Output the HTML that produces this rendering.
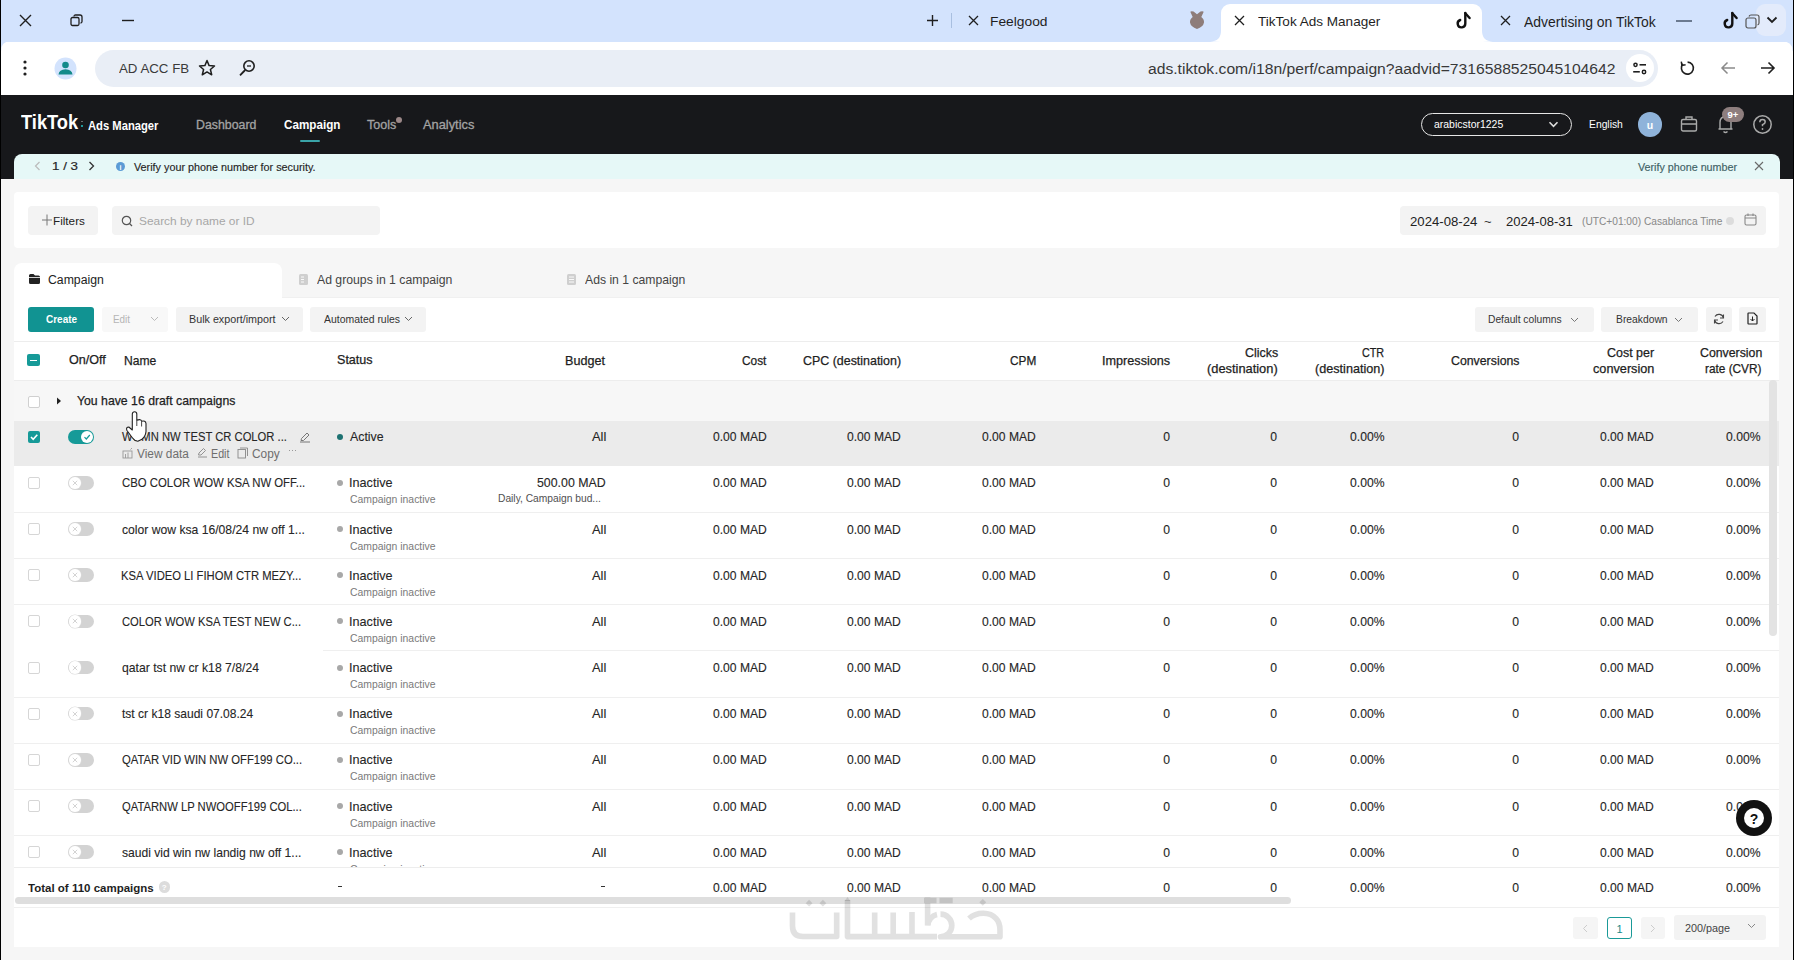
<!DOCTYPE html><html><head><meta charset="utf-8"><style>
html,body{margin:0;padding:0;width:1794px;height:960px;overflow:hidden;background:#f6f6f6;}
body{position:relative;font-family:"Liberation Sans",sans-serif;}
.t{position:absolute;white-space:nowrap;transform-origin:0 0;}
.r{position:absolute;}
svg{position:absolute;overflow:visible;}
</style></head><body>
<div class="r" style="left:0px;top:0px;width:1794.00px;height:41.50px;background:#d3e3fd;"></div>
<div class="r" style="left:0px;top:41.5px;width:1794.00px;height:53.50px;background:#ffffff;"></div>
<div class="r" style="left:1221px;top:4.2px;width:261.00px;height:37.80px;background:#ffffff;border-radius:9px 9px 0 0;"></div>
<svg style="left:0px;top:0.00px" width="1794" height="50"><path d="M1210 41.5 Q1221 41.5 1221 30.5 V42Z M1493 41.5 Q1482 41.5 1482 30.5 V42Z" fill="#fff"/><path d="M0 53 V41.5 H10 Q1.2 41.5 1.2 50.5Z M1794 53 V41.5 H1782 Q1792.5 41.5 1792.5 50.5Z" fill="#d3e3fd"/></svg>
<div class="r" style="left:95px;top:50px;width:1563.00px;height:37.00px;background:#e9eef6;border-radius:19px;"></div>
<div class="r" style="left:1626px;top:54px;width:28.00px;height:28.00px;background:#ffffff;border-radius:50%;"></div>
<div class="r" style="left:1755.5px;top:4px;width:30.50px;height:31.50px;background:#e3ebfb;border-radius:9px;"></div>
<svg style="left:19px;top:14.00px" width="14" height="14"><path d="M1 1L12 12M12 1L1 12" stroke="#1f1f1f" stroke-width="1.4" fill="none"/></svg>
<svg style="left:70px;top:14.00px" width="14" height="14"><rect x="1" y="3.5" width="8" height="8" rx="1.5" stroke="#1f1f1f" stroke-width="1.3" fill="none"/><path d="M4 2.5 Q4 1 5.5 1 H10 Q12 1 12 3 V7.5 Q12 9 10.5 9" stroke="#1f1f1f" stroke-width="1.3" fill="none"/></svg>
<svg style="left:121px;top:19.00px" width="14" height="4"><path d="M1 1.5H13" stroke="#1f1f1f" stroke-width="1.4"/></svg>
<svg style="left:926px;top:14.00px" width="13" height="13"><path d="M6.5 1V12M1 6.5H12" stroke="#1f1f1f" stroke-width="1.4"/></svg>
<div class="r" style="left:951px;top:13px;width:1.00px;height:15.00px;background:#a8bfe0;"></div>
<svg style="left:968px;top:15.00px" width="11" height="11"><path d="M1 1L10 10M10 1L1 10" stroke="#1f1f1f" stroke-width="1.3"/></svg>
<div class="t" style="left:989.97px;top:13.5px;font-size:13.4px;line-height:16px;color:#1f1f1f;font-weight:normal;transform:scaleX(1.0296);">Feelgood</div>
<svg style="left:0px;top:0.00px" width="1794" height="40"><path d="M1190.3 11.8 Q1191 11 1193.5 11.6 L1197 14.3 L1200.5 11.6 Q1203 11 1203.7 11.8 L1201.3 17 Q1204.3 19.3 1204 22.6 Q1203.2 27 1197 29 Q1190.8 27 1190 22.6 Q1189.7 19.3 1192.7 17 Z" fill="#8e7d7a"/></svg>
<svg style="left:1234px;top:15.00px" width="11" height="11"><path d="M1 1L10 10M10 1L1 10" stroke="#1f1f1f" stroke-width="1.3"/></svg>
<div class="t" style="left:1258.00px;top:13.5px;font-size:13.6px;line-height:16px;color:#1f1f1f;font-weight:normal;transform:scaleX(0.9970);">TikTok Ads Manager</div>
<svg style="left:1456px;top:12.00px" width="16" height="17"><path d="M9.3 1 V11.5 A3.8 3.8 0 1 1 4.2 8" stroke="#111" stroke-width="2.4" fill="none" stroke-linecap="round"/><path d="M9.3 1.2 L13.6 6" stroke="#111" stroke-width="2.4" stroke-linecap="round"/></svg>
<svg style="left:1500px;top:15.00px" width="11" height="11"><path d="M1 1L10 10M10 1L1 10" stroke="#1f1f1f" stroke-width="1.3"/></svg>
<div class="t" style="left:1524.00px;top:13.5px;font-size:13.9px;line-height:16px;color:#1f1f1f;font-weight:normal;transform:scaleX(1.0034);">Advertising on TikTok</div>
<div class="r" style="left:1676px;top:20px;width:16.00px;height:1.50px;background:#6b7a90;"></div>
<svg style="left:1723px;top:12.00px" width="16" height="17"><path d="M9.3 1 V11.5 A3.8 3.8 0 1 1 4.2 8" stroke="#111" stroke-width="2.4" fill="none" stroke-linecap="round"/><path d="M9.3 1.2 L13.6 6" stroke="#111" stroke-width="2.4" stroke-linecap="round"/></svg>
<svg style="left:1745px;top:14.00px" width="15" height="15"><rect x="1" y="4" width="10" height="10" rx="2" stroke="#555" stroke-width="1.2" fill="none"/><path d="M4 2.5 Q4.5 1 6 1 H12 Q14 1 14 3 V9 Q14 10.5 12.5 11" stroke="#555" stroke-width="1.2" fill="none"/></svg>
<svg style="left:1766px;top:16.00px" width="12" height="8"><path d="M1.5 1.5L6 6L10.5 1.5" stroke="#1f1f1f" stroke-width="1.8" fill="none"/></svg>
<svg style="left:22px;top:60.00px" width="6" height="18"><circle cx="3" cy="2" r="1.6" fill="#1f1f1f"/><circle cx="3" cy="8" r="1.6" fill="#1f1f1f"/><circle cx="3" cy="14" r="1.6" fill="#1f1f1f"/></svg>
<svg style="left:54px;top:57.00px" width="23" height="23"><circle cx="11.5" cy="11.5" r="11" fill="#d3e3fd"/><circle cx="11.5" cy="8" r="3.3" fill="#138a8a"/><path d="M4.5 17.5 Q5 12.5 11.5 12.3 Q18 12.5 18.5 17.5 Z" fill="#138a8a"/></svg>
<div class="t" style="left:119.00px;top:60.5px;font-size:13.3px;line-height:16px;color:#3a3a3a;font-weight:normal;transform:scaleX(0.9992);">AD ACC FB</div>
<svg style="left:198px;top:59.00px" width="18" height="18"><path d="M9 1.5 L11.1 6.6 L16.5 7 L12.4 10.5 L13.7 15.8 L9 12.9 L4.3 15.8 L5.6 10.5 L1.5 7 L6.9 6.6 Z" stroke="#1f1f1f" stroke-width="1.5" fill="none" stroke-linejoin="round"/></svg>
<svg style="left:238px;top:59.00px" width="19" height="18"><circle cx="11" cy="7" r="5.2" stroke="#1f1f1f" stroke-width="1.6" fill="none"/><path d="M7.2 11 L2 16.3" stroke="#1f1f1f" stroke-width="1.8"/><path d="M9 7H13" stroke="#1f1f1f" stroke-width="1.3"/></svg>
<div class="t" style="left:1148.00px;top:60.5px;font-size:15.2px;line-height:16px;color:#383838;font-weight:normal;transform:scaleX(1.0319);">ads.tiktok.com/i18n/perf/campaign?aadvid=7316588525045104642</div>
<svg style="left:1632px;top:61.00px" width="17" height="15"><circle cx="3.5" cy="3.8" r="1.6" stroke="#1f1f1f" stroke-width="1.5" fill="none"/><path d="M7.5 3.8H14" stroke="#1f1f1f" stroke-width="1.6"/><circle cx="12" cy="11" r="1.7" stroke="#1f1f1f" stroke-width="1.5" fill="none"/><path d="M1.2 10.8H7.8" stroke="#1f1f1f" stroke-width="1.6"/></svg>
<svg style="left:1679px;top:60.00px" width="17" height="17"><path d="M4.1 3.9 A6 6 0 1 0 8.6 2.1" stroke="#1f1f1f" stroke-width="1.6" fill="none"/><path d="M2.3 1.6 L2.9 5.4 L6.6 4.8" stroke="#1f1f1f" stroke-width="1.5" fill="none"/></svg>
<svg style="left:1720px;top:61.00px" width="16" height="14"><path d="M15 7H2M7.5 1.5L2 7L7.5 12.5" stroke="#8a8a8a" stroke-width="1.5" fill="none"/></svg>
<svg style="left:1760px;top:61.00px" width="16" height="14"><path d="M1 7H14M8.5 1.5L14 7L8.5 12.5" stroke="#1f1f1f" stroke-width="1.6" fill="none"/></svg>
<div class="r" style="left:0px;top:95px;width:1794.00px;height:84.00px;background:#17181b;"></div>
<div class="t" style="left:21.00px;top:114.3px;font-size:20px;line-height:16px;color:#ffffff;font-weight:bold;transform:scaleX(0.9136);">TikTok</div>
<div class="r" style="left:80.5px;top:124.5px;width:2.50px;height:2.50px;background:#25c4c8;border-radius:50%;"></div>
<div class="r" style="left:81px;top:120.5px;width:1.50px;height:1.50px;background:#777777;border-radius:50%;"></div>
<div class="t" style="left:88.00px;top:117.5px;font-size:12.6px;line-height:16px;color:#ffffff;font-weight:bold;transform:scaleX(0.8904);">Ads Manager</div>
<div class="t" style="left:196.00px;top:116.5px;font-size:12.3px;line-height:16px;color:#a3a3a3;font-weight:normal;transform:scaleX(1.0031);-webkit-text-stroke:0.3px #a3a3a3;">Dashboard</div>
<div class="t" style="left:284.00px;top:116.5px;font-size:12.2px;line-height:16px;color:#ffffff;font-weight:bold;transform:scaleX(0.9578);">Campaign</div>
<div class="r" style="left:299.5px;top:140px;width:20.00px;height:2.30px;background:#3aa3a8;border-radius:2px;"></div>
<div class="t" style="left:367.00px;top:116.5px;font-size:12.4px;line-height:16px;color:#a3a3a3;font-weight:normal;transform:scaleX(1.0094);-webkit-text-stroke:0.3px #a3a3a3;">Tools</div>
<div class="r" style="left:396px;top:117px;width:6.00px;height:6.00px;background:#9c8888;border-radius:50%;"></div>
<div class="t" style="left:423.00px;top:116.5px;font-size:12.7px;line-height:16px;color:#a3a3a3;font-weight:normal;transform:scaleX(1.0114);-webkit-text-stroke:0.3px #a3a3a3;">Analytics</div>
<div class="r" style="left:1421px;top:113px;width:151.00px;height:23.00px;background:transparent;border:1.6px solid #e6e6e6;border-radius:12px;box-sizing:border-box;"></div>
<div class="t" style="left:1434.00px;top:115.8px;font-size:11.2px;line-height:16px;color:#ffffff;font-weight:normal;transform:scaleX(0.9351);">arabicstor1225</div>
<svg style="left:1548px;top:121.00px" width="11" height="7"><path d="M1.5 1.3L5.5 5.3L9.5 1.3" stroke="#ddd" stroke-width="1.6" fill="none"/></svg>
<div class="t" style="left:1588.50px;top:115.8px;font-size:11.5px;line-height:16px;color:#ffffff;font-weight:normal;transform:scaleX(0.8976);">English</div>
<div class="r" style="left:1638px;top:112px;width:24.00px;height:24.50px;background:#8fb3da;border-radius:50%;"></div>
<div class="t" style="left:1350px;width:600px;text-align:center;top:116.5px;font-size:10.5px;line-height:16px;color:#ffffff;font-weight:bold;">u</div>
<svg style="left:1680px;top:115.00px" width="18" height="18"><rect x="1.5" y="4.5" width="15" height="11.5" rx="1.5" stroke="#aaa" stroke-width="1.4" fill="none"/><path d="M6 4.5V2H12V4.5M1.5 9H16.5" stroke="#aaa" stroke-width="1.4" fill="none"/></svg>
<svg style="left:1716px;top:113.00px" width="20" height="22"><path d="M4 16 V9.5 Q4 3.8 9.5 3.5 Q15 3.8 15 9.5 V16 Z M2.5 16 H16.5 M7.5 18.5 Q9.5 20.5 11.5 18.5" stroke="#aaa" stroke-width="1.4" fill="none"/></svg>
<div class="r" style="left:1722px;top:107px;width:22.00px;height:15.00px;background:#8e7e7e;border-radius:8px;"></div>
<div class="t" style="left:1433px;width:600px;text-align:center;top:107.0px;font-size:9.5px;line-height:16px;color:#ffffff;font-weight:bold;">9+</div>
<svg style="left:1752px;top:114.00px" width="21" height="21"><circle cx="10.5" cy="10.5" r="8.7" stroke="#aaa" stroke-width="1.5" fill="none"/><path d="M7.8 8.2 Q7.8 5.6 10.5 5.6 Q13.2 5.6 13.2 8 Q13.2 9.6 10.5 10.6 V12.3" stroke="#aaa" stroke-width="1.5" fill="none"/><circle cx="10.5" cy="15" r="0.9" fill="#aaa"/></svg>
<div class="r" style="left:14px;top:154px;width:1766.00px;height:25.00px;background:#e6f8f7;border-radius:8px 8px 0 0;"></div>
<svg style="left:34px;top:161.00px" width="7" height="10"><path d="M5.5 1L1.5 5L5.5 9" stroke="#bbb" stroke-width="1.2" fill="none"/></svg>
<div class="t" style="left:52.00px;top:158.0px;font-size:11.5px;line-height:16px;color:#262626;font-weight:normal;transform:scaleX(1.1601);-webkit-text-stroke:0.2px #262626;">1 / 3</div>
<svg style="left:88px;top:161.00px" width="7" height="10"><path d="M1.5 1L5.5 5L1.5 9" stroke="#333" stroke-width="1.3" fill="none"/></svg>
<div class="r" style="left:116px;top:162px;width:9.00px;height:9.00px;background:#5b9bd5;border-radius:50%;"></div>
<div class="t" style="left:-179.5px;width:600px;text-align:center;top:162.5px;font-size:7px;line-height:9px;color:#ffffff;font-weight:bold;">i</div>
<div class="t" style="left:134.00px;top:158.5px;font-size:10.8px;line-height:16px;color:#262626;font-weight:normal;transform:scaleX(0.9993);-webkit-text-stroke:0.15px #262626;">Verify your phone number for security.</div>
<div class="t" style="left:1638.00px;top:158.5px;font-size:10.6px;line-height:16px;color:#3f6266;font-weight:normal;transform:scaleX(1.0129);-webkit-text-stroke:0.15px #3f6266;">Verify phone number</div>
<svg style="left:1754px;top:161.00px" width="10" height="10"><path d="M1 1L9 9M9 1L1 9" stroke="#6a6a6a" stroke-width="1.1"/></svg>
<div class="r" style="left:14px;top:192px;width:1765.00px;height:56.00px;background:#ffffff;border-radius:4px;"></div>
<div class="r" style="left:28px;top:206px;width:70.00px;height:29.00px;background:#f3f3f3;border-radius:4px;"></div>
<svg style="left:42px;top:214.00px" width="10" height="12"><path d="M5 0.5V11.5M0 6H10" stroke="#777" stroke-width="1"/></svg>
<div class="t" style="left:53.00px;top:212.5px;font-size:11.8px;line-height:16px;color:#222;font-weight:normal;transform:scaleX(0.9933);">Filters</div>
<div class="r" style="left:112px;top:206px;width:268.00px;height:29.00px;background:#f3f3f3;border-radius:4px;"></div>
<svg style="left:121px;top:215.00px" width="12" height="12"><circle cx="5.5" cy="5.5" r="4.2" stroke="#555" stroke-width="1.2" fill="none"/><path d="M8.5 8.5L11 11" stroke="#555" stroke-width="1.2"/></svg>
<div class="t" style="left:138.50px;top:212.7px;font-size:11.8px;line-height:16px;color:#a6a6a6;font-weight:normal;transform:scaleX(1.0068);">Search by name or ID</div>
<div class="r" style="left:1400px;top:206px;width:366.00px;height:29.00px;background:#f3f3f3;border-radius:4px;"></div>
<div class="t" style="left:1409.50px;top:213.5px;font-size:13.1px;line-height:16px;color:#222;font-weight:normal;transform:scaleX(1.0046);">2024-08-24</div>
<div class="t" style="left:1484px;top:213.5px;font-size:13px;line-height:16px;color:#333;font-weight:normal;">~</div>
<div class="t" style="left:1506.00px;top:213.5px;font-size:13.1px;line-height:16px;color:#222;font-weight:normal;transform:scaleX(0.9971);">2024-08-31</div>
<div class="t" style="left:1582.00px;top:213.5px;font-size:10.2px;line-height:16px;color:#888;font-weight:normal;transform:scaleX(0.9984);">(UTC+01:00) Casablanca Time</div>
<div class="r" style="left:1726px;top:217px;width:8.00px;height:8.00px;background:#dcdcdc;border-radius:50%;"></div>
<svg style="left:1744px;top:213.00px" width="13" height="13"><rect x="1" y="2" width="11" height="10" rx="1.5" stroke="#888" stroke-width="1.1" fill="none"/><path d="M1 5H12M4 0.5V3M9 0.5V3" stroke="#888" stroke-width="1.1"/></svg>
<div class="r" style="left:14px;top:297px;width:1765.00px;height:1.00px;background:#f0f0f0;"></div>
<div class="r" style="left:14px;top:263px;width:268.00px;height:35.00px;background:#ffffff;border-radius:8px 8px 0 0;"></div>
<svg style="left:28px;top:273.00px" width="13" height="12"><path d="M1 2.5 Q1 1 2.5 1 H5.5 L7 2.5 H10.5 Q12 2.5 12 4 V9.5 Q12 11 10.5 11 H2.5 Q1 11 1 9.5 Z" fill="#222"/><path d="M1 4.5H12" stroke="#fff" stroke-width="0.8"/></svg>
<div class="t" style="left:47.50px;top:271.8px;font-size:12.3px;line-height:16px;color:#222;font-weight:normal;transform:scaleX(0.9962);">Campaign</div>
<svg style="left:298px;top:273.00px" width="11" height="13"><rect x="1" y="1" width="9" height="11" rx="1.5" fill="#cfcfcf"/><path d="M3 4H6M3 6.5H6M3 9H6" stroke="#fff" stroke-width="0.9"/></svg>
<div class="t" style="left:316.50px;top:271.8px;font-size:12.3px;line-height:16px;color:#444;font-weight:normal;transform:scaleX(0.9949);">Ad groups in 1 campaign</div>
<svg style="left:566px;top:273.00px" width="11" height="13"><rect x="1" y="1" width="9" height="11" rx="1.5" fill="#cfcfcf"/><path d="M3 4H8M3 6.5H8M3 9H8" stroke="#fff" stroke-width="0.9"/></svg>
<div class="t" style="left:585.00px;top:271.8px;font-size:12.2px;line-height:16px;color:#444;font-weight:normal;transform:scaleX(1.0001);">Ads in 1 campaign</div>
<div class="r" style="left:14px;top:298px;width:1765.00px;height:649.00px;background:#ffffff;"></div>
<div class="r" style="left:28px;top:307px;width:66.00px;height:25.00px;background:#119392;border-radius:3px;"></div>
<div class="t" style="left:46.00px;top:310.9px;font-size:11px;line-height:16px;color:#ffffff;font-weight:bold;transform:scaleX(0.9085);">Create</div>
<div class="r" style="left:102px;top:307px;width:66.00px;height:25.00px;background:#f8f8f8;border-radius:3px;"></div>
<div class="t" style="left:113.00px;top:310.9px;font-size:11px;line-height:16px;color:#b5b5b5;font-weight:normal;transform:scaleX(0.8995);">Edit</div>
<svg style="left:150px;top:316.00px" width="9" height="6"><path d="M1 1L4.5 4.5L8 1" stroke="#bbb" stroke-width="1" fill="none"/></svg>
<div class="r" style="left:176px;top:307px;width:127.00px;height:25.00px;background:#f3f3f3;border-radius:3px;"></div>
<div class="t" style="left:189.00px;top:310.9px;font-size:11px;line-height:16px;color:#333;font-weight:normal;transform:scaleX(0.9764);">Bulk export/import</div>
<svg style="left:281px;top:316.00px" width="9" height="6"><path d="M1 1L4.5 4.5L8 1" stroke="#666" stroke-width="1" fill="none"/></svg>
<div class="r" style="left:310px;top:307px;width:116.00px;height:25.00px;background:#f3f3f3;border-radius:3px;"></div>
<div class="t" style="left:323.50px;top:310.9px;font-size:11px;line-height:16px;color:#333;font-weight:normal;transform:scaleX(0.9491);">Automated rules</div>
<svg style="left:404px;top:316.00px" width="9" height="6"><path d="M1 1L4.5 4.5L8 1" stroke="#666" stroke-width="1" fill="none"/></svg>
<div class="r" style="left:1475px;top:307px;width:119.00px;height:25.00px;background:#f3f3f3;border-radius:3px;"></div>
<div class="t" style="left:1488.00px;top:310.9px;font-size:11px;line-height:16px;color:#333;font-weight:normal;transform:scaleX(0.9324);">Default columns</div>
<svg style="left:1570px;top:317.00px" width="9" height="6"><path d="M1 1L4.5 4.5L8 1" stroke="#777" stroke-width="1" fill="none"/></svg>
<div class="r" style="left:1601px;top:307px;width:97.00px;height:25.00px;background:#f3f3f3;border-radius:3px;"></div>
<div class="t" style="left:1615.50px;top:310.9px;font-size:11px;line-height:16px;color:#333;font-weight:normal;transform:scaleX(0.9378);">Breakdown</div>
<svg style="left:1674px;top:317.00px" width="9" height="6"><path d="M1 1L4.5 4.5L8 1" stroke="#777" stroke-width="1" fill="none"/></svg>
<div class="r" style="left:1706px;top:307px;width:26.00px;height:25.00px;background:#f3f3f3;border-radius:3px;"></div>
<svg style="left:1713px;top:313.00px" width="12" height="12"><path d="M10.5 5 A4.7 4.7 0 0 0 2 3.5 M1.5 7 A4.7 4.7 0 0 0 10 8.5" stroke="#444" stroke-width="1.2" fill="none"/><path d="M10.5 1.5V5H7M1.5 10.5V7H5" stroke="#444" stroke-width="1.1" fill="none"/></svg>
<div class="r" style="left:1739px;top:307px;width:27.00px;height:25.00px;background:#f3f3f3;border-radius:3px;"></div>
<svg style="left:1747px;top:312.00px" width="11" height="13"><path d="M1 1.5 Q1 1 1.5 1 H7 L10 4 V11.5 Q10 12 9.5 12 H1.5 Q1 12 1 11.5 Z" stroke="#222" stroke-width="1.2" fill="none"/><path d="M5.5 4.5V9M3.5 7L5.5 9L7.5 7" stroke="#222" stroke-width="1" fill="none"/></svg>
<div class="r" style="left:14px;top:341px;width:1765.00px;height:1.00px;background:#ededed;"></div>
<div class="r" style="left:14px;top:380px;width:1765.00px;height:1.00px;background:#ededed;"></div>
<div class="r" style="left:27px;top:354px;width:12.50px;height:12.00px;background:#169a98;border-radius:2px;"></div>
<div class="r" style="left:30px;top:359.5px;width:6.50px;height:1.50px;background:#ffffff;"></div>
<div class="t" style="left:68.50px;top:351.5px;font-size:12.2px;line-height:16px;color:#1e1e1e;font-weight:normal;transform:scaleX(1.0334);-webkit-text-stroke:0.25px #1e1e1e;">On/Off</div>
<div class="t" style="left:123.51px;top:352.5px;font-size:12.2px;line-height:16px;color:#1e1e1e;font-weight:normal;transform:scaleX(0.9927);-webkit-text-stroke:0.25px #1e1e1e;">Name</div>
<div class="t" style="left:337.00px;top:351.5px;font-size:12.2px;line-height:16px;color:#1e1e1e;font-weight:normal;transform:scaleX(1.0303);-webkit-text-stroke:0.25px #1e1e1e;">Status</div>
<div class="t" style="left:564.97px;top:352.5px;font-size:12.2px;line-height:16px;color:#1e1e1e;font-weight:normal;transform:scaleX(1.0329);-webkit-text-stroke:0.25px #1e1e1e;">Budget</div>
<div class="t" style="left:741.50px;top:352.5px;font-size:12.2px;line-height:16px;color:#1e1e1e;font-weight:normal;transform:scaleX(0.9738);-webkit-text-stroke:0.25px #1e1e1e;">Cost</div>
<div class="t" style="left:803.00px;top:352.5px;font-size:12.2px;line-height:16px;color:#1e1e1e;font-weight:normal;transform:scaleX(1.0195);-webkit-text-stroke:0.25px #1e1e1e;">CPC (destination)</div>
<div class="t" style="left:1009.70px;top:352.5px;font-size:12.2px;line-height:16px;color:#1e1e1e;font-weight:normal;transform:scaleX(0.9692);-webkit-text-stroke:0.25px #1e1e1e;">CPM</div>
<div class="t" style="left:1101.96px;top:352.5px;font-size:12.2px;line-height:16px;color:#1e1e1e;font-weight:normal;transform:scaleX(1.0371);-webkit-text-stroke:0.25px #1e1e1e;">Impressions</div>
<div class="t" style="left:1245.00px;top:344.5px;font-size:12.2px;line-height:16px;color:#1e1e1e;font-weight:normal;transform:scaleX(1.0184);-webkit-text-stroke:0.25px #1e1e1e;">Clicks</div>
<div class="t" style="left:1207.40px;top:361.0px;font-size:12.2px;line-height:16px;color:#1e1e1e;font-weight:normal;transform:scaleX(1.0536);-webkit-text-stroke:0.25px #1e1e1e;">(destination)</div>
<div class="t" style="left:1362.40px;top:344.5px;font-size:12.2px;line-height:16px;color:#1e1e1e;font-weight:normal;transform:scaleX(0.8833);-webkit-text-stroke:0.25px #1e1e1e;">CTR</div>
<div class="t" style="left:1315.20px;top:361.0px;font-size:12.2px;line-height:16px;color:#1e1e1e;font-weight:normal;transform:scaleX(1.0372);-webkit-text-stroke:0.25px #1e1e1e;">(destination)</div>
<div class="t" style="left:1451.40px;top:352.5px;font-size:12.2px;line-height:16px;color:#1e1e1e;font-weight:normal;transform:scaleX(1.0112);-webkit-text-stroke:0.25px #1e1e1e;">Conversions</div>
<div class="t" style="left:1607.00px;top:344.5px;font-size:12.2px;line-height:16px;color:#1e1e1e;font-weight:normal;transform:scaleX(1.0217);-webkit-text-stroke:0.25px #1e1e1e;">Cost per</div>
<div class="t" style="left:1593.40px;top:361.0px;font-size:12.2px;line-height:16px;color:#1e1e1e;font-weight:normal;transform:scaleX(1.0420);-webkit-text-stroke:0.25px #1e1e1e;">conversion</div>
<div class="t" style="left:1699.50px;top:344.5px;font-size:12.2px;line-height:16px;color:#1e1e1e;font-weight:normal;transform:scaleX(1.0104);-webkit-text-stroke:0.25px #1e1e1e;">Conversion</div>
<div class="t" style="left:1704.60px;top:361.0px;font-size:12.2px;line-height:16px;color:#1e1e1e;font-weight:normal;transform:scaleX(0.9695);-webkit-text-stroke:0.25px #1e1e1e;">rate (CVR)</div>
<div class="r" style="left:14px;top:381px;width:1765.00px;height:40.00px;background:#f7f7f7;"></div>
<div class="r" style="left:27.5px;top:395.5px;width:12.00px;height:12.00px;background:#ffffff;border:1px solid #d0d0d0;border-radius:2px;box-sizing:border-box;"></div>
<svg style="left:56px;top:397.00px" width="6" height="8"><path d="M1 0.5L5 4L1 7.5Z" fill="#222"/></svg>
<div class="t" style="left:76.70px;top:392.8px;font-size:12.2px;line-height:16px;color:#1e1e1e;font-weight:normal;transform:scaleX(1.0062);-webkit-text-stroke:0.25px #1e1e1e;">You have 16 draft campaigns</div>
<div style="position:absolute;left:0;top:381px;width:1794px;height:487px;overflow:hidden;">
<div class="r" style="left:14px;top:39.5px;width:1765.00px;height:45.50px;background:#ebebeb;"></div>
<div class="r" style="left:27.5px;top:49.69999999999999px;width:12.00px;height:12.00px;background:#169a98;border-radius:2px;"></div>
<svg style="left:29px;top:50.70px" width="10" height="10"><path d="M2 5L4.2 7.3L8.3 2.8" stroke="#fff" stroke-width="1.6" fill="none"/></svg>
<div class="r" style="left:68px;top:48.69999999999999px;width:26.00px;height:14.00px;background:#169a98;border-radius:7px;"></div>
<div class="r" style="left:81px;top:49.69999999999999px;width:12.00px;height:12.00px;background:#ffffff;border-radius:50%;"></div>
<svg style="left:83px;top:51.70px" width="8" height="8"><path d="M1.5 4.2L3.3 6L6.8 2" stroke="#169a98" stroke-width="1.2" fill="none"/></svg>
<div class="t" style="left:122.00px;top:48.2px;font-size:12.2px;line-height:16px;color:#262626;font-weight:normal;transform:scaleX(0.9216);-webkit-text-stroke:0.1px #262626;">WOMN NW TEST CR COLOR ...</div>
<svg style="left:299px;top:49.70px" width="12" height="12"><path d="M2 9.5L2.5 7.5L8 2L10 4L4.5 9.5Z" stroke="#777" stroke-width="1" fill="none"/><path d="M1 11H11" stroke="#777" stroke-width="1"/></svg>
<div class="r" style="left:337px;top:52.69999999999999px;width:6.00px;height:6.00px;background:#1d7272;border-radius:50%;"></div>
<div class="t" style="left:350.30px;top:48.2px;font-size:12.2px;line-height:16px;color:#262626;font-weight:normal;transform:scaleX(1.0147);-webkit-text-stroke:0.1px #262626;">Active</div>
<svg style="left:122px;top:66.20px" width="12" height="12"><rect x="1" y="4" width="9" height="7" stroke="#999" stroke-width="0.9" fill="none"/><path d="M3.5 11V7M6 11V5.5M8.5 2.5L10 1" stroke="#999" stroke-width="0.9"/></svg>
<div class="t" style="left:136.80px;top:64.7px;font-size:12px;line-height:16px;color:#6e6e6e;font-weight:normal;transform:scaleX(0.9885);">View data</div>
<svg style="left:197px;top:66.20px" width="11" height="11"><path d="M1.5 8L2 6L6.5 1.5L8.5 3.5L4 8Z" stroke="#888" stroke-width="0.9" fill="none"/><path d="M1 10H10" stroke="#888" stroke-width="0.9"/></svg>
<div class="t" style="left:211.00px;top:64.7px;font-size:12px;line-height:16px;color:#6e6e6e;font-weight:normal;transform:scaleX(0.8902);">Edit</div>
<svg style="left:237px;top:66.20px" width="12" height="12"><rect x="1" y="2.5" width="7.5" height="8.5" stroke="#888" stroke-width="0.9" fill="none"/><path d="M3 1H10.5V9" stroke="#888" stroke-width="0.9" fill="none"/></svg>
<div class="t" style="left:252.00px;top:64.7px;font-size:12px;line-height:16px;color:#6e6e6e;font-weight:normal;transform:scaleX(0.9888);">Copy</div>
<div class="r" style="left:288.5px;top:68.69999999999999px;width:1.50px;height:1.50px;background:#999;"></div>
<div class="r" style="left:291.5px;top:68.69999999999999px;width:1.50px;height:1.50px;background:#999;"></div>
<div class="r" style="left:294.5px;top:68.69999999999999px;width:1.50px;height:1.50px;background:#999;"></div>
<div class="t" style="left:592.20px;top:48.2px;font-size:12.2px;line-height:16px;color:#262626;font-weight:normal;transform:scaleX(1.0595);-webkit-text-stroke:0.1px #262626;">All</div>
<div class="t" style="left:713.00px;top:48.2px;font-size:12.2px;line-height:16px;color:#262626;font-weight:normal;transform:scaleX(0.9929);-webkit-text-stroke:0.1px #262626;">0.00 MAD</div>
<div class="t" style="left:847.00px;top:48.2px;font-size:12.2px;line-height:16px;color:#262626;font-weight:normal;transform:scaleX(0.9929);-webkit-text-stroke:0.1px #262626;">0.00 MAD</div>
<div class="t" style="left:982.00px;top:48.2px;font-size:12.2px;line-height:16px;color:#262626;font-weight:normal;transform:scaleX(0.9929);-webkit-text-stroke:0.1px #262626;">0.00 MAD</div>
<div class="t" style="right:624px;text-align:right;top:48.2px;font-size:12.2px;line-height:16px;color:#262626;font-weight:normal;-webkit-text-stroke:0.1px #262626;">0</div>
<div class="t" style="right:517px;text-align:right;top:48.2px;font-size:12.2px;line-height:16px;color:#262626;font-weight:normal;-webkit-text-stroke:0.1px #262626;">0</div>
<div class="t" style="left:1350.30px;top:48.2px;font-size:12.2px;line-height:16px;color:#262626;font-weight:normal;transform:scaleX(0.9994);-webkit-text-stroke:0.1px #262626;">0.00%</div>
<div class="t" style="right:275px;text-align:right;top:48.2px;font-size:12.2px;line-height:16px;color:#262626;font-weight:normal;-webkit-text-stroke:0.1px #262626;">0</div>
<div class="t" style="left:1600.00px;top:48.2px;font-size:12.2px;line-height:16px;color:#262626;font-weight:normal;transform:scaleX(0.9929);-webkit-text-stroke:0.1px #262626;">0.00 MAD</div>
<div class="t" style="left:1726.30px;top:48.2px;font-size:12.2px;line-height:16px;color:#262626;font-weight:normal;transform:scaleX(0.9994);-webkit-text-stroke:0.1px #262626;">0.00%</div>
<div class="r" style="left:14px;top:130.86px;width:1765.00px;height:1.00px;background:#efefef;"></div>
<div class="r" style="left:27.5px;top:95.86000000000001px;width:12.00px;height:12.00px;background:#ffffff;border:1px solid #d6d6d6;border-radius:2px;box-sizing:border-box;"></div>
<div class="r" style="left:68px;top:95.06000000000002px;width:26.00px;height:13.60px;background:#d3d3d3;border-radius:7px;"></div>
<div class="r" style="left:68.6px;top:95.66000000000001px;width:12.60px;height:12.40px;background:#ffffff;border-radius:50%;box-shadow:0 0 0 0.6px #dcdcdc;"></div>
<svg style="left:72px;top:98.86px" width="6" height="6"><path d="M0.8 0.8L5.2 5.2M5.2 0.8L0.8 5.2" stroke="#cfcfcf" stroke-width="0.9"/></svg>
<div class="t" style="left:122.00px;top:94.4px;font-size:12.2px;line-height:16px;color:#262626;font-weight:normal;transform:scaleX(0.9331);-webkit-text-stroke:0.1px #262626;">CBO COLOR WOW KSA NW OFF...</div>
<div class="r" style="left:337px;top:98.86000000000001px;width:6.00px;height:6.00px;background:#a8a8a8;border-radius:50%;"></div>
<div class="t" style="left:348.56px;top:94.4px;font-size:12.2px;line-height:16px;color:#262626;font-weight:normal;transform:scaleX(1.0382);-webkit-text-stroke:0.1px #262626;">Inactive</div>
<div class="t" style="left:349.60px;top:110.4px;font-size:10.6px;line-height:16px;color:#7a7a7a;font-weight:normal;transform:scaleX(0.9810);">Campaign inactive</div>
<div class="t" style="left:537.00px;top:94.4px;font-size:12.2px;line-height:16px;color:#262626;font-weight:normal;transform:scaleX(1.0126);-webkit-text-stroke:0.1px #262626;">500.00 MAD</div>
<div class="t" style="left:498.40px;top:109.9px;font-size:10.4px;line-height:16px;color:#505050;font-weight:normal;transform:scaleX(0.9859);">Daily, Campaign bud...</div>
<div class="t" style="left:713.00px;top:94.4px;font-size:12.2px;line-height:16px;color:#262626;font-weight:normal;transform:scaleX(0.9929);-webkit-text-stroke:0.1px #262626;">0.00 MAD</div>
<div class="t" style="left:847.00px;top:94.4px;font-size:12.2px;line-height:16px;color:#262626;font-weight:normal;transform:scaleX(0.9929);-webkit-text-stroke:0.1px #262626;">0.00 MAD</div>
<div class="t" style="left:982.00px;top:94.4px;font-size:12.2px;line-height:16px;color:#262626;font-weight:normal;transform:scaleX(0.9929);-webkit-text-stroke:0.1px #262626;">0.00 MAD</div>
<div class="t" style="right:624px;text-align:right;top:94.4px;font-size:12.2px;line-height:16px;color:#262626;font-weight:normal;-webkit-text-stroke:0.1px #262626;">0</div>
<div class="t" style="right:517px;text-align:right;top:94.4px;font-size:12.2px;line-height:16px;color:#262626;font-weight:normal;-webkit-text-stroke:0.1px #262626;">0</div>
<div class="t" style="left:1350.30px;top:94.4px;font-size:12.2px;line-height:16px;color:#262626;font-weight:normal;transform:scaleX(0.9994);-webkit-text-stroke:0.1px #262626;">0.00%</div>
<div class="t" style="right:275px;text-align:right;top:94.4px;font-size:12.2px;line-height:16px;color:#262626;font-weight:normal;-webkit-text-stroke:0.1px #262626;">0</div>
<div class="t" style="left:1600.00px;top:94.4px;font-size:12.2px;line-height:16px;color:#262626;font-weight:normal;transform:scaleX(0.9929);-webkit-text-stroke:0.1px #262626;">0.00 MAD</div>
<div class="t" style="left:1726.30px;top:94.4px;font-size:12.2px;line-height:16px;color:#262626;font-weight:normal;transform:scaleX(0.9994);-webkit-text-stroke:0.1px #262626;">0.00%</div>
<div class="r" style="left:14px;top:177.01999999999998px;width:1765.00px;height:1.00px;background:#efefef;"></div>
<div class="r" style="left:27.5px;top:142.01999999999998px;width:12.00px;height:12.00px;background:#ffffff;border:1px solid #d6d6d6;border-radius:2px;box-sizing:border-box;"></div>
<div class="r" style="left:68px;top:141.21999999999997px;width:26.00px;height:13.60px;background:#d3d3d3;border-radius:7px;"></div>
<div class="r" style="left:68.6px;top:141.82px;width:12.60px;height:12.40px;background:#ffffff;border-radius:50%;box-shadow:0 0 0 0.6px #dcdcdc;"></div>
<svg style="left:72px;top:145.02px" width="6" height="6"><path d="M0.8 0.8L5.2 5.2M5.2 0.8L0.8 5.2" stroke="#cfcfcf" stroke-width="0.9"/></svg>
<div class="t" style="left:122.00px;top:140.5px;font-size:12.2px;line-height:16px;color:#262626;font-weight:normal;transform:scaleX(0.9974);-webkit-text-stroke:0.1px #262626;">color wow ksa 16/08/24 nw off 1...</div>
<div class="r" style="left:337px;top:145.01999999999998px;width:6.00px;height:6.00px;background:#a8a8a8;border-radius:50%;"></div>
<div class="t" style="left:348.56px;top:140.5px;font-size:12.2px;line-height:16px;color:#262626;font-weight:normal;transform:scaleX(1.0382);-webkit-text-stroke:0.1px #262626;">Inactive</div>
<div class="t" style="left:349.60px;top:156.5px;font-size:10.6px;line-height:16px;color:#7a7a7a;font-weight:normal;transform:scaleX(0.9810);">Campaign inactive</div>
<div class="t" style="left:592.20px;top:140.5px;font-size:12.2px;line-height:16px;color:#262626;font-weight:normal;transform:scaleX(1.0595);-webkit-text-stroke:0.1px #262626;">All</div>
<div class="t" style="left:713.00px;top:140.5px;font-size:12.2px;line-height:16px;color:#262626;font-weight:normal;transform:scaleX(0.9929);-webkit-text-stroke:0.1px #262626;">0.00 MAD</div>
<div class="t" style="left:847.00px;top:140.5px;font-size:12.2px;line-height:16px;color:#262626;font-weight:normal;transform:scaleX(0.9929);-webkit-text-stroke:0.1px #262626;">0.00 MAD</div>
<div class="t" style="left:982.00px;top:140.5px;font-size:12.2px;line-height:16px;color:#262626;font-weight:normal;transform:scaleX(0.9929);-webkit-text-stroke:0.1px #262626;">0.00 MAD</div>
<div class="t" style="right:624px;text-align:right;top:140.5px;font-size:12.2px;line-height:16px;color:#262626;font-weight:normal;-webkit-text-stroke:0.1px #262626;">0</div>
<div class="t" style="right:517px;text-align:right;top:140.5px;font-size:12.2px;line-height:16px;color:#262626;font-weight:normal;-webkit-text-stroke:0.1px #262626;">0</div>
<div class="t" style="left:1350.30px;top:140.5px;font-size:12.2px;line-height:16px;color:#262626;font-weight:normal;transform:scaleX(0.9994);-webkit-text-stroke:0.1px #262626;">0.00%</div>
<div class="t" style="right:275px;text-align:right;top:140.5px;font-size:12.2px;line-height:16px;color:#262626;font-weight:normal;-webkit-text-stroke:0.1px #262626;">0</div>
<div class="t" style="left:1600.00px;top:140.5px;font-size:12.2px;line-height:16px;color:#262626;font-weight:normal;transform:scaleX(0.9929);-webkit-text-stroke:0.1px #262626;">0.00 MAD</div>
<div class="t" style="left:1726.30px;top:140.5px;font-size:12.2px;line-height:16px;color:#262626;font-weight:normal;transform:scaleX(0.9994);-webkit-text-stroke:0.1px #262626;">0.00%</div>
<div class="r" style="left:14px;top:223.17999999999995px;width:1765.00px;height:1.00px;background:#efefef;"></div>
<div class="r" style="left:27.5px;top:188.17999999999995px;width:12.00px;height:12.00px;background:#ffffff;border:1px solid #d6d6d6;border-radius:2px;box-sizing:border-box;"></div>
<div class="r" style="left:68px;top:187.37999999999994px;width:26.00px;height:13.60px;background:#d3d3d3;border-radius:7px;"></div>
<div class="r" style="left:68.6px;top:187.97999999999996px;width:12.60px;height:12.40px;background:#ffffff;border-radius:50%;box-shadow:0 0 0 0.6px #dcdcdc;"></div>
<svg style="left:72px;top:191.18px" width="6" height="6"><path d="M0.8 0.8L5.2 5.2M5.2 0.8L0.8 5.2" stroke="#cfcfcf" stroke-width="0.9"/></svg>
<div class="t" style="left:121.08px;top:186.7px;font-size:12.2px;line-height:16px;color:#262626;font-weight:normal;transform:scaleX(0.9226);-webkit-text-stroke:0.1px #262626;">KSA VIDEO LI FIHOM CTR MEZY...</div>
<div class="r" style="left:337px;top:191.17999999999995px;width:6.00px;height:6.00px;background:#a8a8a8;border-radius:50%;"></div>
<div class="t" style="left:348.56px;top:186.7px;font-size:12.2px;line-height:16px;color:#262626;font-weight:normal;transform:scaleX(1.0382);-webkit-text-stroke:0.1px #262626;">Inactive</div>
<div class="t" style="left:349.60px;top:202.7px;font-size:10.6px;line-height:16px;color:#7a7a7a;font-weight:normal;transform:scaleX(0.9810);">Campaign inactive</div>
<div class="t" style="left:592.20px;top:186.7px;font-size:12.2px;line-height:16px;color:#262626;font-weight:normal;transform:scaleX(1.0595);-webkit-text-stroke:0.1px #262626;">All</div>
<div class="t" style="left:713.00px;top:186.7px;font-size:12.2px;line-height:16px;color:#262626;font-weight:normal;transform:scaleX(0.9929);-webkit-text-stroke:0.1px #262626;">0.00 MAD</div>
<div class="t" style="left:847.00px;top:186.7px;font-size:12.2px;line-height:16px;color:#262626;font-weight:normal;transform:scaleX(0.9929);-webkit-text-stroke:0.1px #262626;">0.00 MAD</div>
<div class="t" style="left:982.00px;top:186.7px;font-size:12.2px;line-height:16px;color:#262626;font-weight:normal;transform:scaleX(0.9929);-webkit-text-stroke:0.1px #262626;">0.00 MAD</div>
<div class="t" style="right:624px;text-align:right;top:186.7px;font-size:12.2px;line-height:16px;color:#262626;font-weight:normal;-webkit-text-stroke:0.1px #262626;">0</div>
<div class="t" style="right:517px;text-align:right;top:186.7px;font-size:12.2px;line-height:16px;color:#262626;font-weight:normal;-webkit-text-stroke:0.1px #262626;">0</div>
<div class="t" style="left:1350.30px;top:186.7px;font-size:12.2px;line-height:16px;color:#262626;font-weight:normal;transform:scaleX(0.9994);-webkit-text-stroke:0.1px #262626;">0.00%</div>
<div class="t" style="right:275px;text-align:right;top:186.7px;font-size:12.2px;line-height:16px;color:#262626;font-weight:normal;-webkit-text-stroke:0.1px #262626;">0</div>
<div class="t" style="left:1600.00px;top:186.7px;font-size:12.2px;line-height:16px;color:#262626;font-weight:normal;transform:scaleX(0.9929);-webkit-text-stroke:0.1px #262626;">0.00 MAD</div>
<div class="t" style="left:1726.30px;top:186.7px;font-size:12.2px;line-height:16px;color:#262626;font-weight:normal;transform:scaleX(0.9994);-webkit-text-stroke:0.1px #262626;">0.00%</div>
<div class="r" style="left:323px;top:269.3399999999999px;width:1456.00px;height:1.00px;background:#efefef;"></div>
<div class="r" style="left:27.5px;top:234.33999999999992px;width:12.00px;height:12.00px;background:#ffffff;border:1px solid #d6d6d6;border-radius:2px;box-sizing:border-box;"></div>
<div class="r" style="left:68px;top:233.5399999999999px;width:26.00px;height:13.60px;background:#d3d3d3;border-radius:7px;"></div>
<div class="r" style="left:68.6px;top:234.13999999999993px;width:12.60px;height:12.40px;background:#ffffff;border-radius:50%;box-shadow:0 0 0 0.6px #dcdcdc;"></div>
<svg style="left:72px;top:237.34px" width="6" height="6"><path d="M0.8 0.8L5.2 5.2M5.2 0.8L0.8 5.2" stroke="#cfcfcf" stroke-width="0.9"/></svg>
<div class="t" style="left:122.00px;top:232.8px;font-size:12.2px;line-height:16px;color:#262626;font-weight:normal;transform:scaleX(0.9201);-webkit-text-stroke:0.1px #262626;">COLOR WOW KSA TEST NEW C...</div>
<div class="r" style="left:337px;top:237.33999999999992px;width:6.00px;height:6.00px;background:#a8a8a8;border-radius:50%;"></div>
<div class="t" style="left:348.56px;top:232.8px;font-size:12.2px;line-height:16px;color:#262626;font-weight:normal;transform:scaleX(1.0382);-webkit-text-stroke:0.1px #262626;">Inactive</div>
<div class="t" style="left:349.60px;top:248.8px;font-size:10.6px;line-height:16px;color:#7a7a7a;font-weight:normal;transform:scaleX(0.9810);">Campaign inactive</div>
<div class="t" style="left:592.20px;top:232.8px;font-size:12.2px;line-height:16px;color:#262626;font-weight:normal;transform:scaleX(1.0595);-webkit-text-stroke:0.1px #262626;">All</div>
<div class="t" style="left:713.00px;top:232.8px;font-size:12.2px;line-height:16px;color:#262626;font-weight:normal;transform:scaleX(0.9929);-webkit-text-stroke:0.1px #262626;">0.00 MAD</div>
<div class="t" style="left:847.00px;top:232.8px;font-size:12.2px;line-height:16px;color:#262626;font-weight:normal;transform:scaleX(0.9929);-webkit-text-stroke:0.1px #262626;">0.00 MAD</div>
<div class="t" style="left:982.00px;top:232.8px;font-size:12.2px;line-height:16px;color:#262626;font-weight:normal;transform:scaleX(0.9929);-webkit-text-stroke:0.1px #262626;">0.00 MAD</div>
<div class="t" style="right:624px;text-align:right;top:232.8px;font-size:12.2px;line-height:16px;color:#262626;font-weight:normal;-webkit-text-stroke:0.1px #262626;">0</div>
<div class="t" style="right:517px;text-align:right;top:232.8px;font-size:12.2px;line-height:16px;color:#262626;font-weight:normal;-webkit-text-stroke:0.1px #262626;">0</div>
<div class="t" style="left:1350.30px;top:232.8px;font-size:12.2px;line-height:16px;color:#262626;font-weight:normal;transform:scaleX(0.9994);-webkit-text-stroke:0.1px #262626;">0.00%</div>
<div class="t" style="right:275px;text-align:right;top:232.8px;font-size:12.2px;line-height:16px;color:#262626;font-weight:normal;-webkit-text-stroke:0.1px #262626;">0</div>
<div class="t" style="left:1600.00px;top:232.8px;font-size:12.2px;line-height:16px;color:#262626;font-weight:normal;transform:scaleX(0.9929);-webkit-text-stroke:0.1px #262626;">0.00 MAD</div>
<div class="t" style="left:1726.30px;top:232.8px;font-size:12.2px;line-height:16px;color:#262626;font-weight:normal;transform:scaleX(0.9994);-webkit-text-stroke:0.1px #262626;">0.00%</div>
<div class="r" style="left:14px;top:315.5px;width:1765.00px;height:1.00px;background:#efefef;"></div>
<div class="r" style="left:27.5px;top:280.5px;width:12.00px;height:12.00px;background:#ffffff;border:1px solid #d6d6d6;border-radius:2px;box-sizing:border-box;"></div>
<div class="r" style="left:68px;top:279.7px;width:26.00px;height:13.60px;background:#d3d3d3;border-radius:7px;"></div>
<div class="r" style="left:68.6px;top:280.3px;width:12.60px;height:12.40px;background:#ffffff;border-radius:50%;box-shadow:0 0 0 0.6px #dcdcdc;"></div>
<svg style="left:72px;top:283.50px" width="6" height="6"><path d="M0.8 0.8L5.2 5.2M5.2 0.8L0.8 5.2" stroke="#cfcfcf" stroke-width="0.9"/></svg>
<div class="t" style="left:122.00px;top:279.0px;font-size:12.2px;line-height:16px;color:#262626;font-weight:normal;transform:scaleX(1.0010);-webkit-text-stroke:0.1px #262626;">qatar tst nw cr k18 7/8/24</div>
<div class="r" style="left:337px;top:283.5px;width:6.00px;height:6.00px;background:#a8a8a8;border-radius:50%;"></div>
<div class="t" style="left:348.56px;top:279.0px;font-size:12.2px;line-height:16px;color:#262626;font-weight:normal;transform:scaleX(1.0382);-webkit-text-stroke:0.1px #262626;">Inactive</div>
<div class="t" style="left:349.60px;top:295.0px;font-size:10.6px;line-height:16px;color:#7a7a7a;font-weight:normal;transform:scaleX(0.9810);">Campaign inactive</div>
<div class="t" style="left:592.20px;top:279.0px;font-size:12.2px;line-height:16px;color:#262626;font-weight:normal;transform:scaleX(1.0595);-webkit-text-stroke:0.1px #262626;">All</div>
<div class="t" style="left:713.00px;top:279.0px;font-size:12.2px;line-height:16px;color:#262626;font-weight:normal;transform:scaleX(0.9929);-webkit-text-stroke:0.1px #262626;">0.00 MAD</div>
<div class="t" style="left:847.00px;top:279.0px;font-size:12.2px;line-height:16px;color:#262626;font-weight:normal;transform:scaleX(0.9929);-webkit-text-stroke:0.1px #262626;">0.00 MAD</div>
<div class="t" style="left:982.00px;top:279.0px;font-size:12.2px;line-height:16px;color:#262626;font-weight:normal;transform:scaleX(0.9929);-webkit-text-stroke:0.1px #262626;">0.00 MAD</div>
<div class="t" style="right:624px;text-align:right;top:279.0px;font-size:12.2px;line-height:16px;color:#262626;font-weight:normal;-webkit-text-stroke:0.1px #262626;">0</div>
<div class="t" style="right:517px;text-align:right;top:279.0px;font-size:12.2px;line-height:16px;color:#262626;font-weight:normal;-webkit-text-stroke:0.1px #262626;">0</div>
<div class="t" style="left:1350.30px;top:279.0px;font-size:12.2px;line-height:16px;color:#262626;font-weight:normal;transform:scaleX(0.9994);-webkit-text-stroke:0.1px #262626;">0.00%</div>
<div class="t" style="right:275px;text-align:right;top:279.0px;font-size:12.2px;line-height:16px;color:#262626;font-weight:normal;-webkit-text-stroke:0.1px #262626;">0</div>
<div class="t" style="left:1600.00px;top:279.0px;font-size:12.2px;line-height:16px;color:#262626;font-weight:normal;transform:scaleX(0.9929);-webkit-text-stroke:0.1px #262626;">0.00 MAD</div>
<div class="t" style="left:1726.30px;top:279.0px;font-size:12.2px;line-height:16px;color:#262626;font-weight:normal;transform:scaleX(0.9994);-webkit-text-stroke:0.1px #262626;">0.00%</div>
<div class="r" style="left:14px;top:361.65999999999997px;width:1765.00px;height:1.00px;background:#efefef;"></div>
<div class="r" style="left:27.5px;top:326.65999999999997px;width:12.00px;height:12.00px;background:#ffffff;border:1px solid #d6d6d6;border-radius:2px;box-sizing:border-box;"></div>
<div class="r" style="left:68px;top:325.85999999999996px;width:26.00px;height:13.60px;background:#d3d3d3;border-radius:7px;"></div>
<div class="r" style="left:68.6px;top:326.46px;width:12.60px;height:12.40px;background:#ffffff;border-radius:50%;box-shadow:0 0 0 0.6px #dcdcdc;"></div>
<svg style="left:72px;top:329.66px" width="6" height="6"><path d="M0.8 0.8L5.2 5.2M5.2 0.8L0.8 5.2" stroke="#cfcfcf" stroke-width="0.9"/></svg>
<div class="t" style="left:122.00px;top:325.2px;font-size:12.2px;line-height:16px;color:#262626;font-weight:normal;transform:scaleX(0.9886);-webkit-text-stroke:0.1px #262626;">tst cr k18 saudi 07.08.24</div>
<div class="r" style="left:337px;top:329.65999999999997px;width:6.00px;height:6.00px;background:#a8a8a8;border-radius:50%;"></div>
<div class="t" style="left:348.56px;top:325.2px;font-size:12.2px;line-height:16px;color:#262626;font-weight:normal;transform:scaleX(1.0382);-webkit-text-stroke:0.1px #262626;">Inactive</div>
<div class="t" style="left:349.60px;top:341.2px;font-size:10.6px;line-height:16px;color:#7a7a7a;font-weight:normal;transform:scaleX(0.9810);">Campaign inactive</div>
<div class="t" style="left:592.20px;top:325.2px;font-size:12.2px;line-height:16px;color:#262626;font-weight:normal;transform:scaleX(1.0595);-webkit-text-stroke:0.1px #262626;">All</div>
<div class="t" style="left:713.00px;top:325.2px;font-size:12.2px;line-height:16px;color:#262626;font-weight:normal;transform:scaleX(0.9929);-webkit-text-stroke:0.1px #262626;">0.00 MAD</div>
<div class="t" style="left:847.00px;top:325.2px;font-size:12.2px;line-height:16px;color:#262626;font-weight:normal;transform:scaleX(0.9929);-webkit-text-stroke:0.1px #262626;">0.00 MAD</div>
<div class="t" style="left:982.00px;top:325.2px;font-size:12.2px;line-height:16px;color:#262626;font-weight:normal;transform:scaleX(0.9929);-webkit-text-stroke:0.1px #262626;">0.00 MAD</div>
<div class="t" style="right:624px;text-align:right;top:325.2px;font-size:12.2px;line-height:16px;color:#262626;font-weight:normal;-webkit-text-stroke:0.1px #262626;">0</div>
<div class="t" style="right:517px;text-align:right;top:325.2px;font-size:12.2px;line-height:16px;color:#262626;font-weight:normal;-webkit-text-stroke:0.1px #262626;">0</div>
<div class="t" style="left:1350.30px;top:325.2px;font-size:12.2px;line-height:16px;color:#262626;font-weight:normal;transform:scaleX(0.9994);-webkit-text-stroke:0.1px #262626;">0.00%</div>
<div class="t" style="right:275px;text-align:right;top:325.2px;font-size:12.2px;line-height:16px;color:#262626;font-weight:normal;-webkit-text-stroke:0.1px #262626;">0</div>
<div class="t" style="left:1600.00px;top:325.2px;font-size:12.2px;line-height:16px;color:#262626;font-weight:normal;transform:scaleX(0.9929);-webkit-text-stroke:0.1px #262626;">0.00 MAD</div>
<div class="t" style="left:1726.30px;top:325.2px;font-size:12.2px;line-height:16px;color:#262626;font-weight:normal;transform:scaleX(0.9994);-webkit-text-stroke:0.1px #262626;">0.00%</div>
<div class="r" style="left:14px;top:407.81999999999994px;width:1765.00px;height:1.00px;background:#efefef;"></div>
<div class="r" style="left:27.5px;top:372.81999999999994px;width:12.00px;height:12.00px;background:#ffffff;border:1px solid #d6d6d6;border-radius:2px;box-sizing:border-box;"></div>
<div class="r" style="left:68px;top:372.0199999999999px;width:26.00px;height:13.60px;background:#d3d3d3;border-radius:7px;"></div>
<div class="r" style="left:68.6px;top:372.61999999999995px;width:12.60px;height:12.40px;background:#ffffff;border-radius:50%;box-shadow:0 0 0 0.6px #dcdcdc;"></div>
<svg style="left:72px;top:375.82px" width="6" height="6"><path d="M0.8 0.8L5.2 5.2M5.2 0.8L0.8 5.2" stroke="#cfcfcf" stroke-width="0.9"/></svg>
<div class="t" style="left:122.00px;top:371.3px;font-size:12.2px;line-height:16px;color:#262626;font-weight:normal;transform:scaleX(0.9255);-webkit-text-stroke:0.1px #262626;">QATAR VID WIN NW OFF199 CO...</div>
<div class="r" style="left:337px;top:375.81999999999994px;width:6.00px;height:6.00px;background:#a8a8a8;border-radius:50%;"></div>
<div class="t" style="left:348.56px;top:371.3px;font-size:12.2px;line-height:16px;color:#262626;font-weight:normal;transform:scaleX(1.0382);-webkit-text-stroke:0.1px #262626;">Inactive</div>
<div class="t" style="left:349.60px;top:387.3px;font-size:10.6px;line-height:16px;color:#7a7a7a;font-weight:normal;transform:scaleX(0.9810);">Campaign inactive</div>
<div class="t" style="left:592.20px;top:371.3px;font-size:12.2px;line-height:16px;color:#262626;font-weight:normal;transform:scaleX(1.0595);-webkit-text-stroke:0.1px #262626;">All</div>
<div class="t" style="left:713.00px;top:371.3px;font-size:12.2px;line-height:16px;color:#262626;font-weight:normal;transform:scaleX(0.9929);-webkit-text-stroke:0.1px #262626;">0.00 MAD</div>
<div class="t" style="left:847.00px;top:371.3px;font-size:12.2px;line-height:16px;color:#262626;font-weight:normal;transform:scaleX(0.9929);-webkit-text-stroke:0.1px #262626;">0.00 MAD</div>
<div class="t" style="left:982.00px;top:371.3px;font-size:12.2px;line-height:16px;color:#262626;font-weight:normal;transform:scaleX(0.9929);-webkit-text-stroke:0.1px #262626;">0.00 MAD</div>
<div class="t" style="right:624px;text-align:right;top:371.3px;font-size:12.2px;line-height:16px;color:#262626;font-weight:normal;-webkit-text-stroke:0.1px #262626;">0</div>
<div class="t" style="right:517px;text-align:right;top:371.3px;font-size:12.2px;line-height:16px;color:#262626;font-weight:normal;-webkit-text-stroke:0.1px #262626;">0</div>
<div class="t" style="left:1350.30px;top:371.3px;font-size:12.2px;line-height:16px;color:#262626;font-weight:normal;transform:scaleX(0.9994);-webkit-text-stroke:0.1px #262626;">0.00%</div>
<div class="t" style="right:275px;text-align:right;top:371.3px;font-size:12.2px;line-height:16px;color:#262626;font-weight:normal;-webkit-text-stroke:0.1px #262626;">0</div>
<div class="t" style="left:1600.00px;top:371.3px;font-size:12.2px;line-height:16px;color:#262626;font-weight:normal;transform:scaleX(0.9929);-webkit-text-stroke:0.1px #262626;">0.00 MAD</div>
<div class="t" style="left:1726.30px;top:371.3px;font-size:12.2px;line-height:16px;color:#262626;font-weight:normal;transform:scaleX(0.9994);-webkit-text-stroke:0.1px #262626;">0.00%</div>
<div class="r" style="left:14px;top:453.98px;width:1765.00px;height:1.00px;background:#efefef;"></div>
<div class="r" style="left:27.5px;top:418.98px;width:12.00px;height:12.00px;background:#ffffff;border:1px solid #d6d6d6;border-radius:2px;box-sizing:border-box;"></div>
<div class="r" style="left:68px;top:418.18px;width:26.00px;height:13.60px;background:#d3d3d3;border-radius:7px;"></div>
<div class="r" style="left:68.6px;top:418.78000000000003px;width:12.60px;height:12.40px;background:#ffffff;border-radius:50%;box-shadow:0 0 0 0.6px #dcdcdc;"></div>
<svg style="left:72px;top:421.98px" width="6" height="6"><path d="M0.8 0.8L5.2 5.2M5.2 0.8L0.8 5.2" stroke="#cfcfcf" stroke-width="0.9"/></svg>
<div class="t" style="left:122.00px;top:417.5px;font-size:12.2px;line-height:16px;color:#262626;font-weight:normal;transform:scaleX(0.9222);-webkit-text-stroke:0.1px #262626;">QATARNW LP NWOOFF199 COL...</div>
<div class="r" style="left:337px;top:421.98px;width:6.00px;height:6.00px;background:#a8a8a8;border-radius:50%;"></div>
<div class="t" style="left:348.56px;top:417.5px;font-size:12.2px;line-height:16px;color:#262626;font-weight:normal;transform:scaleX(1.0382);-webkit-text-stroke:0.1px #262626;">Inactive</div>
<div class="t" style="left:349.60px;top:433.5px;font-size:10.6px;line-height:16px;color:#7a7a7a;font-weight:normal;transform:scaleX(0.9810);">Campaign inactive</div>
<div class="t" style="left:592.20px;top:417.5px;font-size:12.2px;line-height:16px;color:#262626;font-weight:normal;transform:scaleX(1.0595);-webkit-text-stroke:0.1px #262626;">All</div>
<div class="t" style="left:713.00px;top:417.5px;font-size:12.2px;line-height:16px;color:#262626;font-weight:normal;transform:scaleX(0.9929);-webkit-text-stroke:0.1px #262626;">0.00 MAD</div>
<div class="t" style="left:847.00px;top:417.5px;font-size:12.2px;line-height:16px;color:#262626;font-weight:normal;transform:scaleX(0.9929);-webkit-text-stroke:0.1px #262626;">0.00 MAD</div>
<div class="t" style="left:982.00px;top:417.5px;font-size:12.2px;line-height:16px;color:#262626;font-weight:normal;transform:scaleX(0.9929);-webkit-text-stroke:0.1px #262626;">0.00 MAD</div>
<div class="t" style="right:624px;text-align:right;top:417.5px;font-size:12.2px;line-height:16px;color:#262626;font-weight:normal;-webkit-text-stroke:0.1px #262626;">0</div>
<div class="t" style="right:517px;text-align:right;top:417.5px;font-size:12.2px;line-height:16px;color:#262626;font-weight:normal;-webkit-text-stroke:0.1px #262626;">0</div>
<div class="t" style="left:1350.30px;top:417.5px;font-size:12.2px;line-height:16px;color:#262626;font-weight:normal;transform:scaleX(0.9994);-webkit-text-stroke:0.1px #262626;">0.00%</div>
<div class="t" style="right:275px;text-align:right;top:417.5px;font-size:12.2px;line-height:16px;color:#262626;font-weight:normal;-webkit-text-stroke:0.1px #262626;">0</div>
<div class="t" style="left:1600.00px;top:417.5px;font-size:12.2px;line-height:16px;color:#262626;font-weight:normal;transform:scaleX(0.9929);-webkit-text-stroke:0.1px #262626;">0.00 MAD</div>
<div class="t" style="left:1726.30px;top:417.5px;font-size:12.2px;line-height:16px;color:#262626;font-weight:normal;transform:scaleX(0.9994);-webkit-text-stroke:0.1px #262626;">0.00%</div>
<div class="r" style="left:14px;top:500.1399999999999px;width:1765.00px;height:1.00px;background:#efefef;"></div>
<div class="r" style="left:27.5px;top:465.1399999999999px;width:12.00px;height:12.00px;background:#ffffff;border:1px solid #d6d6d6;border-radius:2px;box-sizing:border-box;"></div>
<div class="r" style="left:68px;top:464.33999999999986px;width:26.00px;height:13.60px;background:#d3d3d3;border-radius:7px;"></div>
<div class="r" style="left:68.6px;top:464.9399999999999px;width:12.60px;height:12.40px;background:#ffffff;border-radius:50%;box-shadow:0 0 0 0.6px #dcdcdc;"></div>
<svg style="left:72px;top:468.14px" width="6" height="6"><path d="M0.8 0.8L5.2 5.2M5.2 0.8L0.8 5.2" stroke="#cfcfcf" stroke-width="0.9"/></svg>
<div class="t" style="left:122.00px;top:463.6px;font-size:12.2px;line-height:16px;color:#262626;font-weight:normal;transform:scaleX(0.9929);-webkit-text-stroke:0.1px #262626;">saudi vid win nw landig nw off 1...</div>
<div class="r" style="left:337px;top:468.1399999999999px;width:6.00px;height:6.00px;background:#a8a8a8;border-radius:50%;"></div>
<div class="t" style="left:348.56px;top:463.6px;font-size:12.2px;line-height:16px;color:#262626;font-weight:normal;transform:scaleX(1.0382);-webkit-text-stroke:0.1px #262626;">Inactive</div>
<div class="t" style="left:349.60px;top:479.6px;font-size:10.6px;line-height:16px;color:#7a7a7a;font-weight:normal;transform:scaleX(0.9810);">Campaign inactive</div>
<div class="t" style="left:592.20px;top:463.6px;font-size:12.2px;line-height:16px;color:#262626;font-weight:normal;transform:scaleX(1.0595);-webkit-text-stroke:0.1px #262626;">All</div>
<div class="t" style="left:713.00px;top:463.6px;font-size:12.2px;line-height:16px;color:#262626;font-weight:normal;transform:scaleX(0.9929);-webkit-text-stroke:0.1px #262626;">0.00 MAD</div>
<div class="t" style="left:847.00px;top:463.6px;font-size:12.2px;line-height:16px;color:#262626;font-weight:normal;transform:scaleX(0.9929);-webkit-text-stroke:0.1px #262626;">0.00 MAD</div>
<div class="t" style="left:982.00px;top:463.6px;font-size:12.2px;line-height:16px;color:#262626;font-weight:normal;transform:scaleX(0.9929);-webkit-text-stroke:0.1px #262626;">0.00 MAD</div>
<div class="t" style="right:624px;text-align:right;top:463.6px;font-size:12.2px;line-height:16px;color:#262626;font-weight:normal;-webkit-text-stroke:0.1px #262626;">0</div>
<div class="t" style="right:517px;text-align:right;top:463.6px;font-size:12.2px;line-height:16px;color:#262626;font-weight:normal;-webkit-text-stroke:0.1px #262626;">0</div>
<div class="t" style="left:1350.30px;top:463.6px;font-size:12.2px;line-height:16px;color:#262626;font-weight:normal;transform:scaleX(0.9994);-webkit-text-stroke:0.1px #262626;">0.00%</div>
<div class="t" style="right:275px;text-align:right;top:463.6px;font-size:12.2px;line-height:16px;color:#262626;font-weight:normal;-webkit-text-stroke:0.1px #262626;">0</div>
<div class="t" style="left:1600.00px;top:463.6px;font-size:12.2px;line-height:16px;color:#262626;font-weight:normal;transform:scaleX(0.9929);-webkit-text-stroke:0.1px #262626;">0.00 MAD</div>
<div class="t" style="left:1726.30px;top:463.6px;font-size:12.2px;line-height:16px;color:#262626;font-weight:normal;transform:scaleX(0.9994);-webkit-text-stroke:0.1px #262626;">0.00%</div>
</div>
<div class="r" style="left:1769px;top:380px;width:8.00px;height:256.00px;background:#e3e3e3;border-radius:4px;"></div>
<div class="r" style="left:14px;top:867px;width:1765.00px;height:1.00px;background:#ededed;"></div>
<div class="t" style="left:28.40px;top:879.5px;font-size:11.4px;line-height:16px;color:#1e1e1e;font-weight:bold;transform:scaleX(1.0100);">Total of 110 campaigns</div>
<div class="r" style="left:158.5px;top:881px;width:11.50px;height:11.50px;background:#dcdcdc;border-radius:50%;"></div>
<div class="t" style="left:-135.8px;width:600px;text-align:center;top:882.5px;font-size:8px;line-height:10px;color:#fff;font-weight:bold;">?</div>
<div class="r" style="left:338px;top:886px;width:4.00px;height:1.30px;background:#333;"></div>
<div class="r" style="left:601px;top:886px;width:4.00px;height:1.30px;background:#333;"></div>
<div class="t" style="left:713.00px;top:879.5px;font-size:12.2px;line-height:16px;color:#262626;font-weight:normal;transform:scaleX(0.9929);-webkit-text-stroke:0.1px #262626;">0.00 MAD</div>
<div class="t" style="left:847.00px;top:879.5px;font-size:12.2px;line-height:16px;color:#262626;font-weight:normal;transform:scaleX(0.9929);-webkit-text-stroke:0.1px #262626;">0.00 MAD</div>
<div class="t" style="left:982.00px;top:879.5px;font-size:12.2px;line-height:16px;color:#262626;font-weight:normal;transform:scaleX(0.9929);-webkit-text-stroke:0.1px #262626;">0.00 MAD</div>
<div class="t" style="right:624px;text-align:right;top:879.5px;font-size:12.2px;line-height:16px;color:#262626;font-weight:normal;-webkit-text-stroke:0.1px #262626;">0</div>
<div class="t" style="right:517px;text-align:right;top:879.5px;font-size:12.2px;line-height:16px;color:#262626;font-weight:normal;-webkit-text-stroke:0.1px #262626;">0</div>
<div class="t" style="left:1350.30px;top:879.5px;font-size:12.2px;line-height:16px;color:#262626;font-weight:normal;transform:scaleX(0.9994);-webkit-text-stroke:0.1px #262626;">0.00%</div>
<div class="t" style="right:275px;text-align:right;top:879.5px;font-size:12.2px;line-height:16px;color:#262626;font-weight:normal;-webkit-text-stroke:0.1px #262626;">0</div>
<div class="t" style="left:1600.00px;top:879.5px;font-size:12.2px;line-height:16px;color:#262626;font-weight:normal;transform:scaleX(0.9929);-webkit-text-stroke:0.1px #262626;">0.00 MAD</div>
<div class="t" style="left:1726.30px;top:879.5px;font-size:12.2px;line-height:16px;color:#262626;font-weight:normal;transform:scaleX(0.9994);-webkit-text-stroke:0.1px #262626;">0.00%</div>
<div class="r" style="left:15px;top:897px;width:1276.00px;height:7.00px;background:#dedede;border-radius:4px;"></div>
<div class="r" style="left:14px;top:906.5px;width:1765.00px;height:1.00px;background:#efefef;"></div>
<div class="r" style="left:1573px;top:917px;width:25.00px;height:22.00px;background:#f5f5f5;border-radius:3px;"></div>
<svg style="left:1582px;top:924.00px" width="6" height="9"><path d="M5 1L1.5 4.5L5 8" stroke="#ccc" stroke-width="1" fill="none"/></svg>
<div class="r" style="left:1607px;top:917px;width:25.00px;height:22.00px;background:#ffffff;border:1.5px solid #1a9a98;border-radius:3px;box-sizing:border-box;"></div>
<div class="t" style="left:1319.5px;width:600px;text-align:center;top:920.5px;font-size:11px;line-height:16px;color:#1a8a8a;font-weight:normal;">1</div>
<div class="r" style="left:1641px;top:917px;width:24.00px;height:22.00px;background:#f5f5f5;border-radius:3px;"></div>
<svg style="left:1650px;top:924.00px" width="6" height="9"><path d="M1 1L4.5 4.5L1 8" stroke="#ccc" stroke-width="1" fill="none"/></svg>
<div class="r" style="left:1674px;top:915px;width:92.00px;height:25.00px;background:#f3f3f3;border-radius:3px;"></div>
<div class="t" style="left:1685.00px;top:919.5px;font-size:11px;line-height:16px;color:#444;font-weight:normal;transform:scaleX(0.9833);">200/page</div>
<svg style="left:1747px;top:923.00px" width="9" height="6"><path d="M1 1L4.5 4.5L8 1" stroke="#888" stroke-width="1" fill="none"/></svg>
<svg style="left:0;top:0" width="1794" height="960"><g opacity="0.115" stroke="#000" stroke-width="5.6" fill="none" stroke-linejoin="round"><path d="M792.5 912.6 V926 Q792.5 936.5 803 936.5 H836.7 V912.6"/><path d="M847.5 900 V936.6 H937"/><path d="M874.7 912.6 V936.6 M893.2 912.6 V936.6 M912 912 V936.6"/><path d="M927.6 897.4 V925.4"/><path d="M927.9 925.4 A11.3 11.3 0 0 1 937 914.6"/><path d="M940.5 914.1 A11.3 11.3 0 0 1 940.5 936.7 H1000 V930 C1000 926 999.5 922 996 918.5 C990 911.5 977 911.5 969 918.5"/><path d="M924 900.5 H936.5 M939.5 900.5 H952.7"/></g><g opacity="0.115" fill="#000"><path d="M809.1 899.8 L812.5 903.2 L809.1 906.6 L805.7 903.2Z"/><path d="M822.9 899.8 L826.3 903.2 L822.9 906.6 L819.5 903.2Z"/><path d="M982.8 898.9 L986.2 902.3 L982.8 905.7 L979.4 902.3Z"/><path d="M844.7 901 L847.5 897 L850.3 901Z"/></g></svg>
<svg style="left:0;top:0" width="1794" height="960"><path d="M132.3 414 Q132.5 411.8 134.6 411.8 Q136.7 411.8 136.8 414 V420.3 Q140.8 418.6 141.6 421.2 Q145.6 420.2 146 423.5 V431.5 Q145.6 436.5 141.5 439.6 L137.8 441.2 Q134.3 440.8 132.3 437.8 L126.8 430.2 Q125.8 427.2 128.8 427 L132.3 430 Z" fill="#fff" stroke="#222" stroke-width="1.1" stroke-linejoin="round"/><path d="M136.8 420.3 V426 M141.6 421.2 V426.5" stroke="#333" stroke-width="0.9"/></svg>
<div class="r" style="left:1736px;top:800px;width:36.00px;height:36.00px;background:#111111;border-radius:50%;"></div>
<div class="r" style="left:1744px;top:808px;width:20.00px;height:20.00px;background:#ffffff;border-radius:50%;"></div>
<div class="t" style="left:1454px;width:600px;text-align:center;top:811.0px;font-size:14px;line-height:16px;color:#111;font-weight:bold;">?</div>
<div class="r" style="left:0px;top:0px;width:1.20px;height:960.00px;background:#000;"></div>
<div class="r" style="left:1792.5px;top:0px;width:1.50px;height:960.00px;background:#000;"></div>
</body></html>
